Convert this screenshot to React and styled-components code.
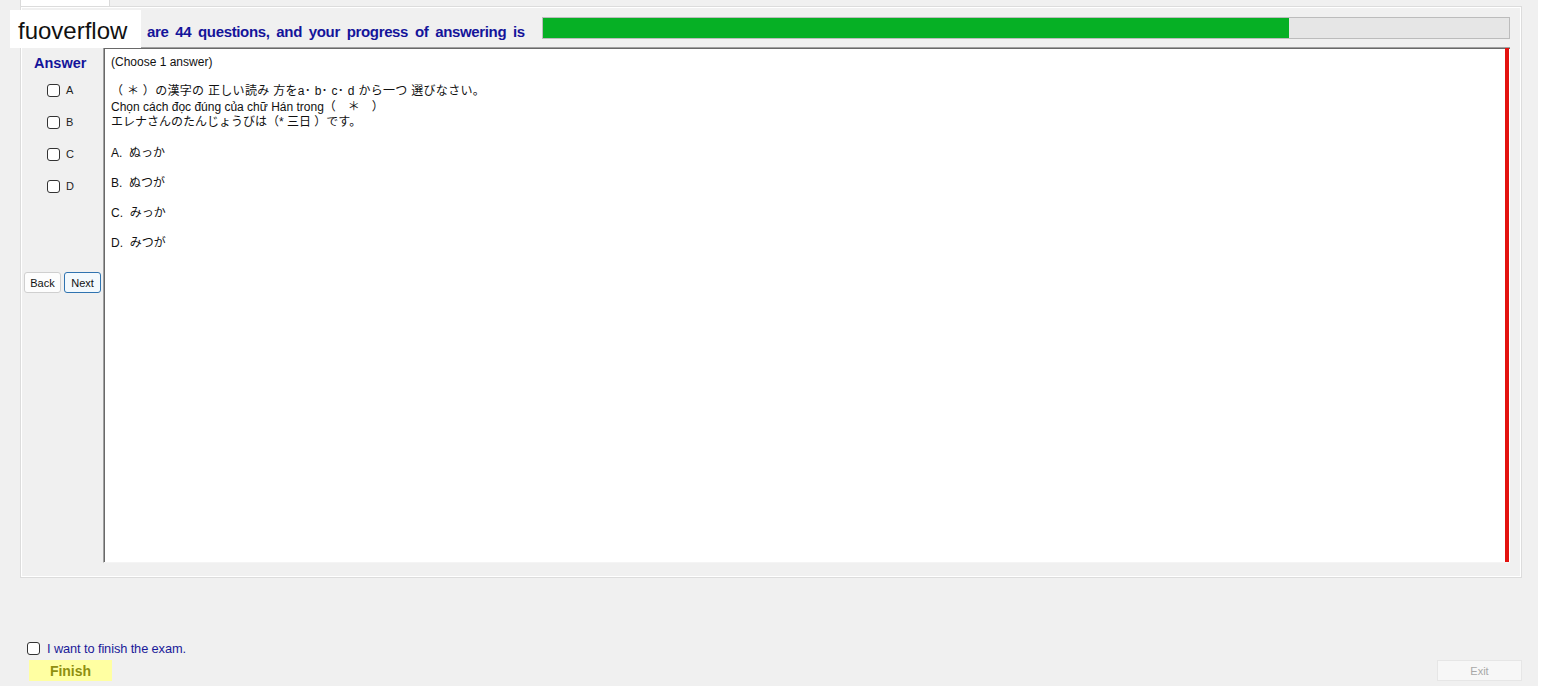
import React from "react";
import styled, { createGlobalStyle } from "styled-components";

const Global = createGlobalStyle`
  html, body { margin: 0; padding: 0; background: #ffffff; }
  body { font-family: "Liberation Sans", Arial, sans-serif; }
  * { box-sizing: border-box; }
`;

const Form = styled.div`
  position: relative;
  width: 1538px;
  height: 686px;
  background: #f0f0f0;
  display: flex;
  flex-direction: column;
`;

const TabArea = styled.div`
  padding-left: 20px;
  width: 1522px;
  display: flex;
  flex-direction: column;
`;

const TabHeader = styled.div`
  width: 90px;
  height: 6px;
  background: #ffffff;
  border-left: 1px solid #dadada;
  border-right: 1px solid #dadada;
`;

const TabPanel = styled.div`
  height: 572px;
  border: 1px solid #dcdcdc;
  box-shadow: inset 1px 1px 0 #ffffff, inset -1px -1px 0 #ffffff;
  background: #f0f0f0;
  padding: 10px 11px 14px 0;
  display: flex;
  flex-direction: column;
  gap: 8px;
`;

const HeaderRow = styled.div`
  display: flex;
  align-items: center;
  height: 22px;
  padding-left: 80px;
`;

const ProgressText = styled.div`
  font-family: "Liberation Sans", Arial, sans-serif;
  font-weight: bold;
  font-size: 15px;
  letter-spacing: -0.35px;
  word-spacing: 3px;
  color: #14149a;
  white-space: nowrap;
  padding-top: 6px;
`;

const ProgressBar = styled.div`
  margin-left: auto;
  width: 968px;
  height: 22px;
  border: 1px solid #bcbcbc;
  background: #e6e6e6;
  display: flex;
`;

const ProgressFill = styled.div`
  height: 100%;
  background: #06b025;
`;

const Body = styled.div`
  display: flex;
  height: 516px;
`;

const LeftCol = styled.div`
  width: 82px;
  display: flex;
  flex-direction: column;
  padding-top: 7px;
`;

const AnswerTitle = styled.div`
  font-family: "Liberation Sans", Arial, sans-serif;
  font-weight: bold;
  font-size: 14.5px;
  line-height: 18px;
  color: #14149a;
  padding-left: 13px;
  margin-bottom: 2px;
`;

const ChoiceRow = styled.label`
  height: 32px;
  display: flex;
  align-items: center;
  padding-left: 26px;
  gap: 6px;
  font-family: "Liberation Sans", Arial, sans-serif;
  font-size: 11px;
  color: #222;
`;

const Box = styled.input.attrs({ type: "checkbox" })`
  appearance: none;
  margin: 0;
  width: 13px;
  height: 13px;
  border: 1px solid #333333;
  border-radius: 3px;
  background: #ffffff;
  flex: none;
`;

const NavRow = styled.div`
  margin-top: 70px;
  display: flex;
  gap: 3px;
  padding-left: 3px;
`;

const NavButton = styled.button`
  width: 37px;
  height: 21px;
  padding: 0;
  font-family: "Liberation Sans", Arial, sans-serif;
  font-size: 11px;
  color: #111;
  background: ${(p) => (p.$focused ? "#f3f9fd" : "#fdfdfd")};
  border: 1px solid ${(p) => (p.$focused ? "#2f73b0" : "#cfcfcf")};
  border-radius: 3px;
`;

const QuestionBox = styled.div`
  flex: 1;
  display: flex;
  background: #ffffff;
  border-top: 1px solid #a0a0a0;
  border-left: 1px solid #a0a0a0;
  border-bottom: 1px solid #f4f4f4;
  box-shadow: inset 1px 1px 0 #696969;
`;

const QuestionContent = styled.div`
  flex: 1;
  padding: 7px 0 0 7px;
  font-family: "Liberation Sans", "Noto Sans CJK JP", sans-serif;
  font-size: 12px;
  color: #111;
`;

const Line = styled.div`
  line-height: ${(p) => p.$lh || "15px"};
  white-space: pre;
  letter-spacing: ${(p) => p.$ls || "0"};
`;

const Stem = styled.div`
  margin-top: 14px;
  margin-bottom: 7px;
`;

const Option = styled.div`
  height: 30px;
  line-height: 30px;
  white-space: pre;
`;

const RedBar = styled.div`
  width: 4px;
  margin-right: 1px;
  background: #e3120f;
`;

const Footer = styled.div`
  margin-top: auto;
  display: flex;
  flex-direction: column;
  padding-bottom: 5px;
`;

const FinishCheck = styled.label`
  display: flex;
  align-items: center;
  gap: 7px;
  height: 16px;
  padding-left: 27px;
  margin-bottom: 4px;
  font-family: "Liberation Sans", Arial, sans-serif;
  font-size: 12.8px;
  color: #1a1a99;
  letter-spacing: -0.1px;
`;

const ButtonRow = styled.div`
  display: flex;
  justify-content: space-between;
  padding-left: 29px;
  padding-right: 16px;
`;

const FinishButton = styled.button`
  width: 83px;
  height: 21px;
  padding: 0;
  border: none;
  background: #ffffa2;
  font-family: "Liberation Sans", Arial, sans-serif;
  font-weight: bold;
  font-size: 14px;
  color: #8f8f10;
`;

const ExitButton = styled.button`
  width: 85px;
  height: 21px;
  padding: 0;
  border: 1px solid #e6e6e6;
  background: #f7f7f7;
  font-family: "Liberation Sans", Arial, sans-serif;
  font-size: 11px;
  color: #a8a8a8;
`;

const Watermark = styled.div`
  position: absolute;
  left: 10px;
  top: 10px;
  width: 131px;
  height: 38px;
  background: #ffffff;
  font-family: "Liberation Sans", Arial, sans-serif;
  font-size: 24px;
  color: #111;
  line-height: 42px;
  padding-left: 8px;
`;

const total = 44;
const answered = 34;
const choices = ["A", "B", "C", "D"];
const options = [
  "A.  ぬっか",
  "B.  ぬつが",
  "C.  みっか",
  "D.  みつが",
];

export default function App() {
  return (
    <>
      <Global />
      <Form>
        <TabArea>
          <TabHeader />
          <TabPanel>
            <HeaderRow>
              <ProgressText>
                There are {total} questions, and your progress of answering is
              </ProgressText>
              <ProgressBar>
                <ProgressFill style={{ width: `${(answered / total) * 100}%` }} />
              </ProgressBar>
            </HeaderRow>
            <Body>
              <LeftCol>
                <AnswerTitle>Answer</AnswerTitle>
                {choices.map((c) => (
                  <ChoiceRow key={c}>
                    <Box />
                    {c}
                  </ChoiceRow>
                ))}
                <NavRow>
                  <NavButton>Back</NavButton>
                  <NavButton $focused>Next</NavButton>
                </NavRow>
              </LeftCol>
              <QuestionBox>
                <QuestionContent>
                  <Line>(Choose 1 answer)</Line>
                  <Stem>
                    <Line $lh="15.5px" $ls="0.3px">（ ＊ ）の漢字の 正しい読み 方をa･ b･ c･ d から一つ 選びなさい。</Line>
                    <Line $lh="15.5px">Chọn cách đọc đúng của chữ Hán trong（　＊　）</Line>
                    <Line $lh="15.5px">エレナさんのたんじょうびは（* 三日 ）です。</Line>
                  </Stem>
                  {options.map((o) => (
                    <Option key={o}>{o}</Option>
                  ))}
                </QuestionContent>
                <RedBar />
              </QuestionBox>
            </Body>
          </TabPanel>
        </TabArea>
        <Footer>
          <FinishCheck>
            <Box />
            I want to finish the exam.
          </FinishCheck>
          <ButtonRow>
            <FinishButton>Finish</FinishButton>
            <ExitButton>Exit</ExitButton>
          </ButtonRow>
        </Footer>
        <Watermark>fuoverflow</Watermark>
      </Form>
    </>
  );
}
